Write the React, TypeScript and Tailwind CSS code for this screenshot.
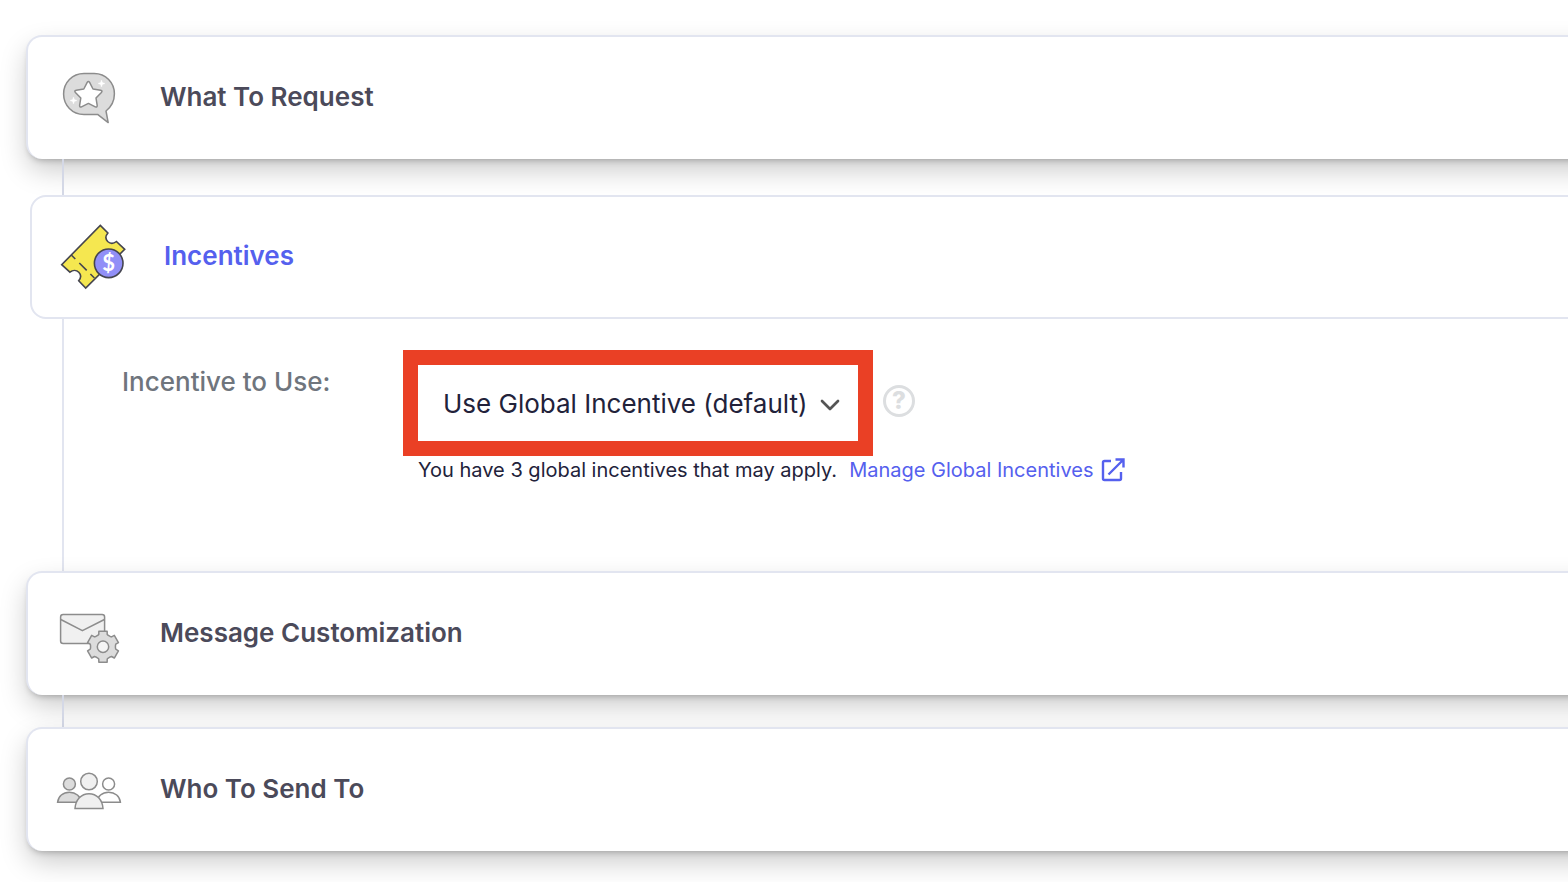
import React from 'react'
import { ChevronDown } from 'lucide-react'

const gearPath = (cx: number, cy: number) => {
  const corners = [[-25, 12.5], [-19, 13], [-15, 16], [15, 16], [19, 13], [25, 12.5]]
  const points: string[] = []
  for (let tooth = 0; tooth < 6; tooth++) {
    corners.forEach(([offset, radius]) => {
      const angle = ((tooth * 60 - 90 + offset) * Math.PI) / 180
      points.push(`${(cx + radius * Math.cos(angle)).toFixed(2)} ${(cy + radius * Math.sin(angle)).toFixed(2)}`)
    })
  }
  return `M${points.join('L')}Z`
}

const RequestIcon: React.FC = () => (
  <svg viewBox="0 0 80 80" className="size-20 shrink-0" stroke="#8c8c8c" strokeWidth="1.5" strokeLinejoin="round" aria-hidden="true">
    <path
      d="M34 15.6h10.2c11.6 0 20.2 8.8 20.2 20.2 0 7.2-3.3 13.2-8.4 17.2l2.2 11.6-10.6-8.2H34c-11.8 0-20.4-9.2-20.4-20.4S22.2 15.6 34 15.6z"
      fill="#dcdcdc"
    />
    <path
      d="M37.2 24.4q1.2-2 2.4 0l3.4 6.6 7.6 1.2q2.3.6.8 2.3l-5.4 5.5 1.2 7.4q.1 2.3-1.9 1.5l-6.9-3.5-6.9 3.5q-2 .8-1.9-1.5l1.2-7.4-5.4-5.5q-1.5-1.7.8-2.3l7.6-1.2z"
      fill="#fff"
    />
    <path d="M51.5 22l.9 2.6 2.6.9-2.6.9-.9 2.6-.9-2.6-2.6-.9 2.6-.9zM23.5 39l.9 2.6 2.6.9-2.6.9-.9 2.6-.9-2.6-2.6-.9 2.6-.9z" fill="#fff" stroke="#fff" strokeWidth=".4" />
  </svg>
)

const IncentiveIcon: React.FC = () => (
  <svg viewBox="0 0 80 80" className="size-20 shrink-0" stroke="#45454f" strokeWidth="1.6" aria-hidden="true">
    <path
      d="M46.3 8.4l7.6 7.6c-2.6 3-2.2 6.4-.2 8.5 2.2 2.1 5.7 2.4 8.7 0l8.3 7.8-39 38.7-7-7.2c2.4-2.8 2.3-6.2.1-8.5-2.3-2.3-5.9-2.600-8.900-.1l-8.200-7.500z"
      fill="#f5e750"
    />
    <path d="M17.3 38l4 4M25.300 46l7.400 7.400M36.400 57l4 4" />
    <circle cx="54.7" cy="46.3" r="14.3" fill="#918ff7" />
    <text x="54.7" y="54" textAnchor="middle" fill="#fff" stroke="none" fontFamily="Lato, sans-serif" fontSize="22" fontWeight="700">$</text>
  </svg>
)

const MessageIcon: React.FC = () => (
  <svg viewBox="0 0 80 80" className="size-20 shrink-0" stroke="#8c8c8c" strokeWidth="1.5" strokeLinejoin="round" aria-hidden="true">
    <rect x="10.6" y="20.5" width="44" height="29" rx="2.5" fill="#f0f0f0" />
    <path d="M10.8 25.5l21.6 11.2 22-11.2" fill="none" />
    <path d={gearPath(53, 52.7)} fill="#dcdcdc" />
    <circle cx="53" cy="52.7" r="5.7" fill="#f5f5f5" />
  </svg>
)

const PeopleIcon: React.FC = () => (
  <svg viewBox="0 0 80 80" className="size-20 shrink-0" stroke="#8c8c8c" strokeWidth="1.5" aria-hidden="true">
    <circle cx="19.4" cy="34" r="6" fill="#dcdcdc" />
    <path d="M7.6 52.3c.6-6 5.4-10 11.8-10s11.2 4 11.8 10z" fill="#dcdcdc" />
    <circle cx="58.6" cy="34" r="6" fill="#fff" />
    <path d="M46.8 52.3c.6-6 5.4-10 11.8-10s11.2 4 11.8 10z" fill="#fff" />
    <circle cx="39" cy="31.5" r="8.3" fill="#f0f0f0" />
    <path d="M25 58.6c.6-8.8 6.2-14.9 14-14.9s13.4 6.1 14 14.9z" fill="#f0f0f0" />
  </svg>
)

const ExternalIcon: React.FC = () => (
  <svg viewBox="0 0 24 24" className="size-6" fill="none" stroke="currentColor" strokeWidth="2.4" aria-hidden="true">
    <path d="M10 3H3.5Q2 3 2 4.5v16Q2 22 3.500 22h15q1.500 0 1.500-1.500V14M7.500 16.500L22 2M14.500 1.500H22.500V9.500" />
  </svg>
)

interface SectionHeaderProps {
  title: string
  icon: React.ReactNode
  open?: boolean
}

const SectionHeader: React.FC<SectionHeaderProps> = ({ title, icon, open = false }) => (
  <h2
    className={
      open
        ? 'ml-[30px] -mr-16 h-[124px] rounded-2xl border-2 border-[#e2e5f0] bg-white text-[#5560ee]'
        : 'ml-[26px] -mr-16 h-[124px] rounded-2xl border-2 border-b-0 border-[#e2e5f0] bg-white text-[#4b4a5a] shadow-[0_4px_6px_-3px_rgba(0,0,0,0.25),0_12px_28px_-2px_rgba(0,0,0,0.22)]'
    }
  >
    <button type="button" aria-expanded={open} className="flex h-full w-full items-center gap-[30px] pl-[22px] text-left text-[26px] font-semibold">
      {icon}
      <span className="pb-[3px]">{title}</span>
    </button>
  </h2>
)

const IncentivePanel: React.FC = () => (
  <div className="ml-[62px] flex h-[252px] border-l-2 border-[#e2e5f0] pt-[31px] pl-[58px]">
    <label htmlFor="incentive" className="w-[281px] shrink-0 pt-3 text-[26px] leading-10 font-medium text-[#6f757d]">
      Incentive to Use:
    </label>
    <div>
      <div className="flex items-center gap-[10px]">
        <div className="relative w-[470px] border-[15px] border-[#ea4025]">
          <select id="incentive" className="h-[76px] w-full appearance-none bg-white pl-[25px] text-[26px] text-[#22223a]">
            <option>Use Global Incentive (default)</option>
          </select>
          <ChevronDown className="pointer-events-none absolute top-6 right-3 size-8 text-[#555]" strokeWidth={2} />
        </div>
        <button type="button" aria-label="Help" className="mb-1 flex size-8 items-center justify-center rounded-full border-3 border-[#dcdee0] text-2xl font-extrabold text-[#dcdee0]">
          ?
        </button>
      </div>
      <p className="flex items-center gap-3 pl-[15px] text-[20px] leading-7 whitespace-nowrap text-[#22223a]">
        You have 3 global incentives that may apply.
        <a href="#global-incentives" className="flex items-center gap-2 text-[#5560ee]">
          Manage Global Incentives
          <ExternalIcon />
        </a>
      </p>
    </div>
  </div>
)

export default function App() {
  return (
    <main className="min-h-screen overflow-hidden bg-white pt-[35px] pb-[31px] font-['Inter',sans-serif]">
      <SectionHeader title="What To Request" icon={<RequestIcon />} />
      <div className="ml-[62px] h-9 border-l-2 border-[#d4d8e6]" />
      <SectionHeader title="Incentives" icon={<IncentiveIcon />} open />
      <IncentivePanel />
      <SectionHeader title="Message Customization" icon={<MessageIcon />} />
      <div className="ml-[62px] h-8 border-l-2 border-[#d4d8e6]" />
      <SectionHeader title="Who To Send To" icon={<PeopleIcon />} />
    </main>
  )
}
